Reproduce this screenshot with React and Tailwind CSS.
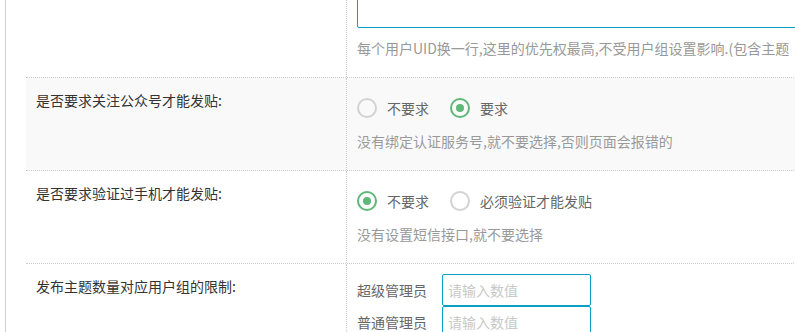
import React from 'react';

const Radio = ({ checked, label }) => (
  <label className="flex items-center mr-[21px]">
    <span
      className={
        checked
          ? 'w-[20px] h-[20px] rounded-full border-2 border-[#5fb878] flex items-center justify-center'
          : 'w-[20px] h-[20px] rounded-full border-2 border-[#d2d2d2]'
      }
    >
      {checked && <span className="w-[8px] h-[8px] rounded-full bg-[#5fb878]" />}
    </span>
    <span className="ml-[10px] text-[#666]">{label}</span>
  </label>
);

const Row = ({ label, shaded, children, padBottom = 'pb-[19px]' }) => (
  <div className={`flex border-b border-dotted border-[#ccc] ${shaded ? 'bg-[#f9f9f9]' : 'bg-white'}`}>
    <div className="w-[321px] shrink-0 border-r border-dotted border-[#ccc] pl-[10px] pt-[12px] text-[#333]">
      {label}
    </div>
    <div className={`flex-1 pl-[10px] pt-[10px] ${padBottom}`}>{children}</div>
  </div>
);

const Help = ({ children, className = '' }) => (
  <div className={`text-[#999] whitespace-nowrap ${className}`}>{children}</div>
);

const LimitInput = ({ label }) => (
  <div className="flex items-center h-[32px]">
    <span className="w-[70px] text-[#666]">{label}</span>
    <input
      className="ml-[15px] w-[149px] h-[32px] border border-[#0aa0c4] rounded-[2px] px-[5px] outline-none placeholder:text-[#c8c8c8]"
      placeholder="请输入数值"
    />
  </div>
);

export default function App() {
  return (
    <div className="w-[795px] h-[332px] overflow-hidden bg-white text-[14px] leading-[20px] font-['Noto_Sans_CJK_SC',sans-serif]">
      <div className="ml-[5px] h-full flex flex-col border-l border-[#d2d2d2] pl-[20px]">
        {/* scrolled: the top of the form is above the window */}
        <div className="-mt-[72px] w-[900px]">
          <Row label="">
            <textarea className="block w-[560px] h-[90px] border border-[#0aa0c4] rounded-[2px] outline-none resize-none" />
            <Help className="mt-[10px]">
              每个用户UID换一行,这里的优先权最高,不受用户组设置影响.(包含主题
            </Help>
          </Row>

          <Row label="是否要求关注公众号才能发贴:" shaded>
            <div className="flex items-center h-[40px]">
              <Radio label="不要求" />
              <Radio label="要求" checked />
            </div>
            <Help className="mt-[3px]">没有绑定认证服务号,就不要选择,否则页面会报错的</Help>
          </Row>

          <Row label="是否要求验证过手机才能发贴:">
            <div className="flex items-center h-[40px]">
              <Radio label="不要求" checked />
              <Radio label="必须验证才能发贴" />
            </div>
            <Help className="mt-[3px]">没有设置短信接口,就不要选择</Help>
          </Row>

          <Row label="发布主题数量对应用户组的限制:" padBottom="pb-[10px]">
            <LimitInput label="超级管理员" />
            <LimitInput label="普通管理员" />
          </Row>
        </div>
      </div>
    </div>
  );
}
